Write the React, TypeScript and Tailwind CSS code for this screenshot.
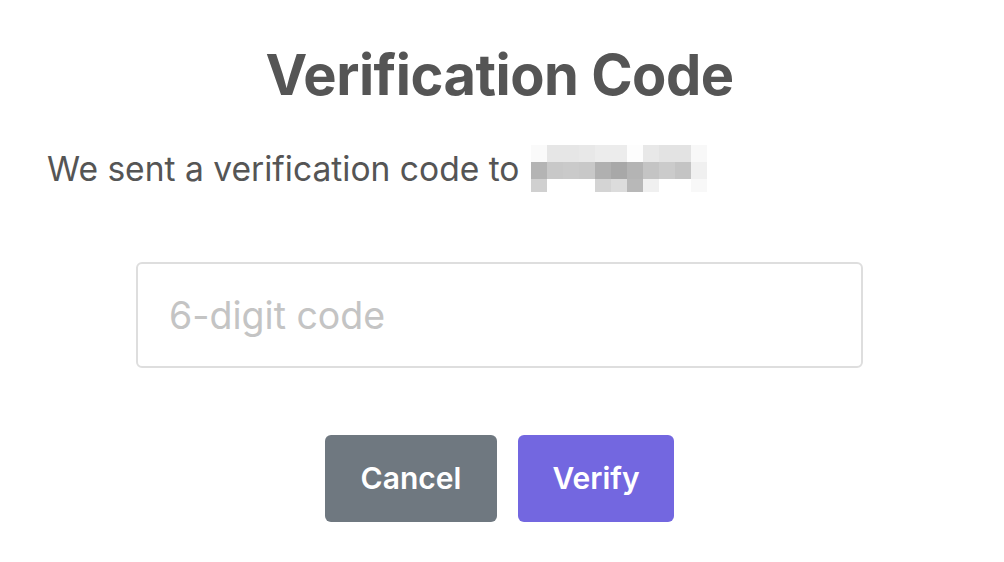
const redacted: string[][] = [
  ["#fafafa", "#e6e6e6", "#e6e6e6", "#e8e8e8", "#ececec", "#ececec", "#fdfdfd", "#e8e8e8", "#e3e3e3", "#e3e3e3", "#f8f8f8"],
  ["#b4b4b4", "#c8c8c8", "#cacaca", "#c8c8c8", "#b0b0b0", "#a8a8a8", "#b4b4b4", "#c4c4c4", "#cbcbcb", "#c4c4c4", "#f0f0f0"],
  ["#d0d0d0", "#ffffff", "#ffffff", "#ffffff", "#d4d4d4", "#dcdcdc", "#b8b8b8", "#f0f0f0", "#ffffff", "#ffffff", "#f8f8f8"],
];

function RedactedEmail() {
  return (
    <span className="inline-grid grid-cols-[repeat(11,16px)] grid-rows-[17px_17px_13px] align-middle">
      {redacted.flatMap((row, r) =>
        row.map((c, i) => <span key={`${r}-${i}`} style={{ backgroundColor: c }} />),
      )}
    </span>
  );
}

export default function App() {
  return (
    <div className="min-h-screen bg-white font-['Inter','Liberation_Sans',sans-serif] text-[#555555]">
      <div className="w-[999px] px-[47px] pt-[42px]">
        <h1 className="text-center text-[56px] font-bold leading-[1.2] tracking-[-0.5px]">
          Verification Code
        </h1>
        <p className="mt-[36px] flex items-center gap-[11px] text-[33.6px] leading-[1.2]">
          <span>We sent a verification code to</span>
          <RedactedEmail />
        </p>

        <div className="mx-auto mt-[70px] w-[727px]">
          <input
            type="text"
            placeholder="6-digit code"
            className="h-[106px] w-full rounded-[6px] border-2 border-[#dedede] px-[31px] text-[37.5px] text-[#555555] outline-none placeholder:text-[#c4c4c4]"
          />
        </div>

        <div className="mt-[67px] flex justify-center gap-[21px]">
          <button className="h-[87px] w-[172px] rounded-[6px] bg-[#6f7880] text-[30px] font-semibold text-white">
            Cancel
          </button>
          <button className="h-[87px] w-[156px] rounded-[6px] bg-[#7367e0] text-[30px] font-semibold text-white">
            Verify
          </button>
        </div>
      </div>
    </div>
  );
}
